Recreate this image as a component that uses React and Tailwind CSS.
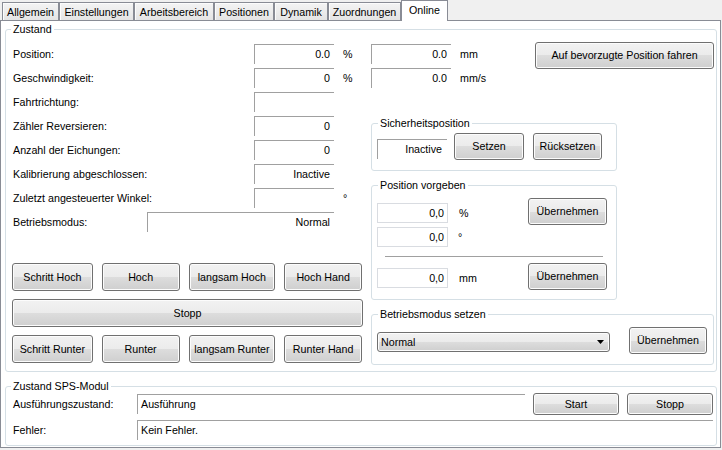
import React from 'react';

const tabs = [
  ['Allgemein', 'w-[57px]'],
  ['Einstellungen', 'w-[75px]'],
  ['Arbeitsbereich', 'w-[80px]'],
  ['Positionen', 'w-[60px]'],
  ['Dynamik', 'w-[54px]'],
  ['Zuordnungen', 'w-[73px]'],
];

function Btn({ className = '', children }) {
  return (
    <button
      type="button"
      className={`flex items-center justify-center rounded-[3px] border border-[#707070] bg-[linear-gradient(to_bottom,#f2f2f2_0%,#ebebeb_50%,#dddddd_50%,#cfcfcf_100%)] shadow-[inset_0_0_0_1px_#fcfcfc] text-[10.7px] leading-none text-black ${className}`}
    >
      {children}
    </button>
  );
}

// Fixed3D-style read-only box: dark top/left edge only
function Box({ className = '', left = false, children }) {
  return (
    <div
      className={`flex h-[20px] items-center border-t border-l border-[#a0a0a0] ${left ? 'justify-start pl-[3px]' : 'justify-end pr-[4px]'} ${className}`}
    >
      {children}
    </div>
  );
}

function Num({ children }) {
  return (
    <div className="flex h-[20px] w-[71px] items-center justify-end border border-[#d9dce1] pr-[3px]">
      {children}
    </div>
  );
}

function Group({ title, className = '', children }) {
  return (
    <fieldset className={`rounded-[3px] border border-[#d5dfe5] ${className}`}>
      <legend className="ml-[6px] px-[2px] leading-[13px]">{title}</legend>
      {children}
    </fieldset>
  );
}

function Row({ label, value, unit }) {
  return (
    <div className="flex h-[20px] items-center">
      <span className="w-[242px] pl-[1px]">{label}</span>
      <Box className="w-[80px]">{value}</Box>
      <span className="ml-[9px]">{unit}</span>
    </div>
  );
}

export default function App() {
  return (
    <div className="h-[450px] w-[722px] overflow-hidden bg-[#f0f0f0] font-['Liberation_Sans',Arial,sans-serif] text-[10.7px] text-black">
      {/* Tab strip */}
      <div className="flex h-[20px] items-start pl-[2px]">
        {tabs.map(([name, w]) => (
          <div
            key={name}
            className={`mt-[2px] flex h-[18px] items-center justify-center border border-b-0 border-[#898c95] bg-[linear-gradient(to_bottom,#f4f4f4,#e4e4e4)] pt-[1px] shadow-[inset_1px_1px_0_#fcfcfc] ${w}`}
          >
            {name}
          </div>
        ))}
        <div className="relative z-10 flex h-[21px] w-[47px] justify-center border border-b-0 border-[#898c95] bg-white pt-[3px] leading-[13px]">
          Online
        </div>
      </div>

      {/* Tab page */}
      <div className="flex h-[428px] w-[721px] flex-col border border-[#898c95] bg-white">
        <fieldset className="ml-[4px] mt-[2px] w-[712px] rounded-[3px] border border-[#d5dfe5]">
          <legend className="ml-[5px] px-[2px] leading-[13px]">Zustand</legend>
          <div className="flex pb-[6px] pl-[6px] pr-[2px] pt-[6px]">
            {/* Left column */}
            <div className="mt-[2px] flex w-[350px] flex-col">
              <div className="flex flex-col gap-[4px]">
                <Row label="Position:" value="0.0" unit="%" />
                <Row label="Geschwindigkeit:" value="0" unit="%" />
                <Row label="Fahrtrichtung:" value="" unit="" />
                <Row label="Zähler Reversieren:" value="0" unit="" />
                <Row label="Anzahl der Eichungen:" value="0" unit="" />
                <Row label="Kalibrierung abgeschlossen:" value="Inactive" unit="" />
                <Row label="Zuletzt angesteuerter Winkel:" value="" unit="°" />
                <div className="flex h-[20px] items-center">
                  <span className="w-[135px] pl-[1px]">Betriebsmodus:</span>
                  <Box className="w-[187px]">Normal</Box>
                </div>
              </div>

              <div className="mt-[31px] flex flex-col gap-[8px]">
                <div className="flex gap-[9px]">
                  <Btn className="h-[28px] w-[81px]">Schritt Hoch</Btn>
                  <Btn className="h-[28px] w-[78px]">Hoch</Btn>
                  <Btn className="h-[28px] w-[87px]">langsam Hoch</Btn>
                  <Btn className="h-[28px] w-[78px]">Hoch Hand</Btn>
                </div>
                <Btn className="h-[28px] w-[351px]">Stopp</Btn>
                <div className="flex gap-[9px]">
                  <Btn className="h-[28px] w-[81px]">Schritt Runter</Btn>
                  <Btn className="h-[28px] w-[78px]">Runter</Btn>
                  <Btn className="h-[28px] w-[87px]">langsam Runter</Btn>
                  <Btn className="h-[28px] w-[78px]">Runter Hand</Btn>
                </div>
              </div>
            </div>

            {/* Right column */}
            <div className="ml-[9px] flex w-[343px] flex-col">
              <div className="flex items-start">
                <div className="mt-[2px] flex flex-col gap-[4px]">
                  <div className="flex h-[20px] items-center">
                    <Box className="w-[80px]">0.0</Box>
                    <span className="ml-[9px]">mm</span>
                  </div>
                  <div className="flex h-[20px] items-center">
                    <Box className="w-[80px]">0.0</Box>
                    <span className="ml-[9px]">mm/s</span>
                  </div>
                </div>
                <Btn className="ml-auto h-[27px] w-[179px]">Auf bevorzugte Position fahren</Btn>
              </div>

              <Group title="Sicherheitsposition" className="mt-[29px] w-[246px]">
                <div className="flex items-end pb-[10px] pl-[5px] pt-[3px]">
                  <Box className="mb-[1px] w-[70px] !pr-[5px]">Inactive</Box>
                  <Btn className="ml-[7px] h-[27px] w-[70px]">Setzen</Btn>
                  <Btn className="ml-[9px] h-[27px] w-[69px]">Rücksetzen</Btn>
                </div>
              </Group>

              <Group title="Position vorgeben" className="mt-[8px] w-[246px]">
                <div className="flex flex-col pb-[9px] pl-[5px] pr-[9px] pt-[6px]">
                  <div className="flex items-start">
                    <div className="mt-[5px] flex flex-col gap-[4px]">
                      <div className="flex items-center">
                        <Num>0,0</Num>
                        <span className="ml-[11px]">%</span>
                      </div>
                      <div className="flex items-center">
                        <Num>0,0</Num>
                        <span className="ml-[10px]">°</span>
                      </div>
                    </div>
                    <Btn className="ml-auto h-[27px] w-[79px]">Übernehmen</Btn>
                  </div>
                  <div className="ml-[8px] mt-[9px] h-[2px] w-[218px] border-b border-t border-b-white border-t-[#a0a0a0]" />
                  <div className="mt-[5px] flex items-start">
                    <div className="mt-[5px] flex items-center">
                      <Num>0,0</Num>
                      <span className="ml-[11px]">mm</span>
                    </div>
                    <Btn className="ml-auto h-[27px] w-[79px]">Übernehmen</Btn>
                  </div>
                </div>
              </Group>

              <Group title="Betriebsmodus setzen" className="mt-[8px] w-[343px]">
                <div className="flex items-start pb-[10px] pl-[5px] pt-[6px]">
                  <div className="mt-[5px] flex h-[20px] w-[233px] items-center justify-between rounded-[3px] border border-[#707070] bg-[linear-gradient(to_bottom,#f2f2f2_0%,#ebebeb_50%,#dddddd_50%,#cfcfcf_100%)] pl-[3px] pr-[5px] shadow-[inset_0_0_0_1px_#fcfcfc]">
                    <span>Normal</span>
                    <svg width="7" height="4" viewBox="0 0 7 4">
                      <path d="M0 0h7L3.5 4z" fill="#000" />
                    </svg>
                  </div>
                  <Btn className="ml-[19px] h-[27px] w-[78px]">Übernehmen</Btn>
                </div>
              </Group>
            </div>
          </div>
        </fieldset>

        <fieldset className="ml-[4px] mt-[8px] w-[712px] rounded-[3px] border border-[#d5dfe5]">
          <legend className="ml-[5px] px-[2px] leading-[13px]">Zustand SPS-Modul</legend>
          <div className="flex flex-col pb-[5px] pl-[6px]">
            <div className="flex h-[22px] items-center">
              <span className="w-[125px] pl-[1px]">Ausführungszustand:</span>
              <Box left className="w-[388px]">Ausführung</Box>
              <Btn className="ml-[8px] h-[22px] w-[86px]">Start</Btn>
              <Btn className="ml-[8px] h-[22px] w-[86px]">Stopp</Btn>
            </div>
            <div className="mt-[5px] flex h-[20px] items-center">
              <span className="w-[125px] pl-[1px]">Fehler:</span>
              <Box left className="w-[576px]">Kein Fehler.</Box>
            </div>
          </div>
        </fieldset>
      </div>
    </div>
  );
}
